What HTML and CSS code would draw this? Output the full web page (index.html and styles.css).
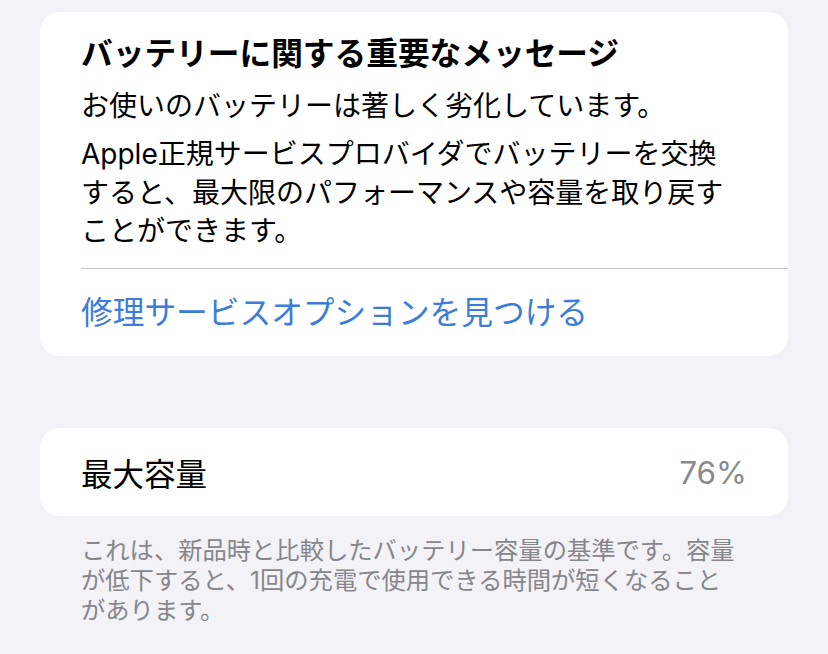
FILE: index.html
```html
<!DOCTYPE html>
<html lang="ja">
<head>
  <meta charset="UTF-8">
  <meta name="viewport" content="width=device-width, initial-scale=1.0">
  <title>バッテリーの状態</title>
  <link rel="stylesheet" href="styles.css">
</head>
<body>

  <section class="card notice">
    <h2 class="notice-title">バッテリーに関する重要なメッセージ</h2>
    <p class="notice-text">お使いのバッテリーは著しく劣化しています。</p>
    <p class="notice-text">Apple正規サービスプロバイダでバッテリーを交換すると、最大限のパフォーマンスや容量を取り戻すことができます。</p>
    <div class="divider"></div>
    <a class="notice-link" href="#">修理サービスオプションを見つける</a>
  </section>

  <section class="card capacity">
    <span class="capacity-label">最大容量</span>
    <span class="capacity-value">76%</span>
  </section>
  <p class="footnote">これは、新品時と比較したバッテリー容量の基準です。容量が低下すると、1回の充電で使用できる時間が短くなることがあります。</p>

</body>
</html>
```

FILE: styles.css
```css
body {
  font-family: Inter, "Noto Sans CJK JP", sans-serif;
  margin: 0;
  padding: 12px 40px 0;
  background-color: #f2f2f7;
  color: #000;
}
.card {
  background-color: #ffffff;
  border-radius: 20px;
}
.notice {
  padding: 22px 0 23px 41px;
}
.notice-title {
  margin: 0 0 13px;
  padding-right: 36px;
  font-size: 31.7px;
  line-height: 40px;
  font-weight: 700;
}
.notice-text {
  margin: 0;
  padding-right: 50px;
  font-size: 28px;
  line-height: 38.5px;
}
.notice-text + .notice-text {
  margin-top: 9.5px;
}
.divider {
  height: 1px;
  margin-top: 17.5px;
  background-color: #c6c6c8;
}
.notice-link {
  display: block;
  padding-top: 24px;
  font-size: 31.7px;
  line-height: 40px;
  color: #3b7dd8;
  text-decoration: none;
}
.capacity {
  margin-top: 72px;
  height: 88px;
  padding: 0 41px;
  display: flex;
  align-items: center;
  justify-content: space-between;
  font-size: 31.5px;
}
.capacity-value {
  color: #8a8a8e;
}
.footnote {
  margin: 19px 0 0;
  padding: 0 46px 0 41px;
  font-size: 24.3px;
  line-height: 30px;
  color: #86868b;
}
```
